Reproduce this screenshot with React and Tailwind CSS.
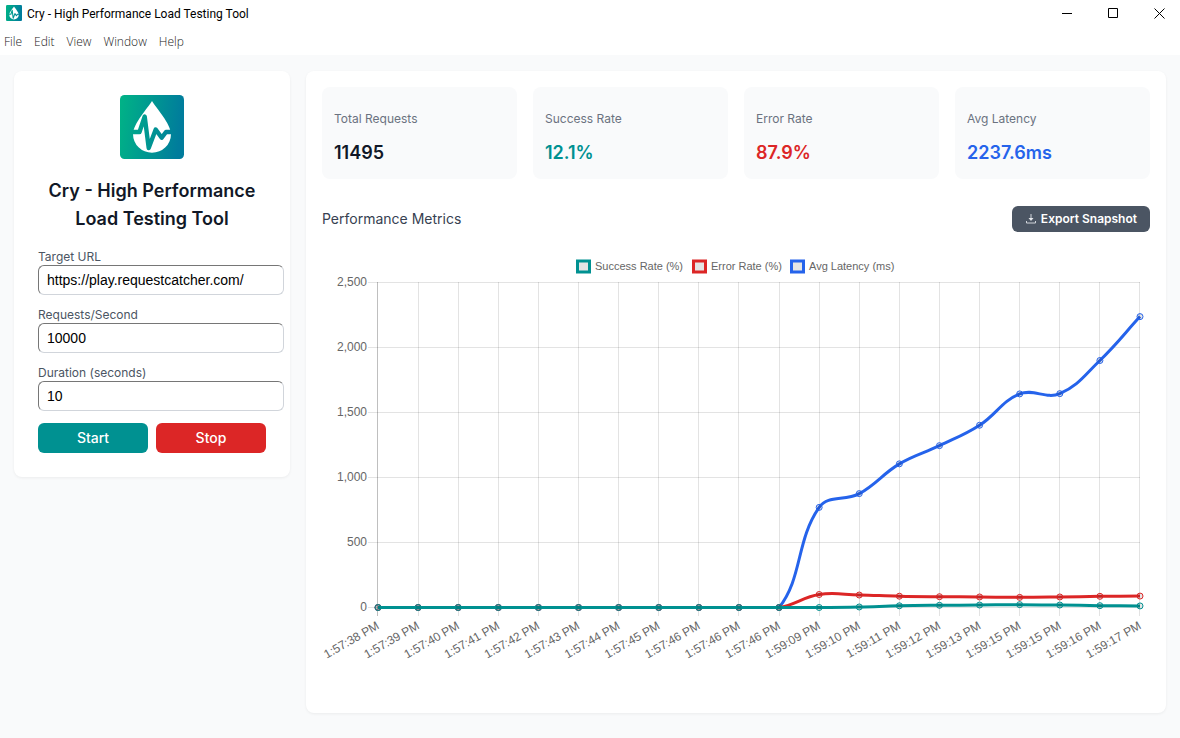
import React from "react";

const LABELS = [
  "1:57:38 PM", "1:57:39 PM", "1:57:40 PM", "1:57:41 PM", "1:57:42 PM",
  "1:57:43 PM", "1:57:44 PM", "1:57:45 PM", "1:57:46 PM", "1:57:46 PM",
  "1:57:46 PM", "1:59:09 PM", "1:59:10 PM", "1:59:11 PM", "1:59:12 PM",
  "1:59:13 PM", "1:59:15 PM", "1:59:15 PM", "1:59:16 PM", "1:59:17 PM",
];

const IDLE = Array(11).fill(0);

const SERIES = [
  { name: "Success Rate (%)", stroke: "#009191", box: 254, data: [...IDLE, 0, 4, 13, 17, 19, 22, 19, 14, 12.1] },
  { name: "Error Rate (%)", stroke: "#dc2626", box: 370, data: [...IDLE, 100, 96, 87, 83, 81, 78, 81, 86, 87.9] },
  { name: "Avg Latency (ms)", stroke: "#2563eb", box: 468, data: [...IDLE, 770, 876, 1105, 1245, 1402, 1643, 1645, 1900, 2237.6] },
];

const AREA = { left: 56, right: 818, top: 34, bottom: 360 };
const MAX = 2500;

const xAt = (i) => AREA.left + ((AREA.right - AREA.left) * i) / (LABELS.length - 1);
const yAt = (v) => AREA.bottom - 0.5 - (v / MAX) * 325;
const snap = (n) => Math.floor(n) + 0.5;
const clamp = (y) => Math.min(AREA.bottom - 0.5, Math.max(AREA.top, y));

// Cardinal-style spline with control points weighted by neighbour distance.
function curve(data, tension = 0.4) {
  const pts = data.map((v, i) => ({ x: xAt(i), y: yAt(v) }));
  const ctl = pts.map((p, i) => {
    const a = pts[i - 1] || p;
    const b = pts[i + 1] || p;
    const d1 = Math.hypot(p.x - a.x, p.y - a.y);
    const d2 = Math.hypot(b.x - p.x, b.y - p.y);
    const f1 = (tension * d1) / (d1 + d2);
    const f2 = (tension * d2) / (d1 + d2);
    return {
      px: p.x - f1 * (b.x - a.x),
      py: clamp(p.y - f1 * (b.y - a.y)),
      nx: p.x + f2 * (b.x - a.x),
      ny: clamp(p.y + f2 * (b.y - a.y)),
    };
  });
  return pts
    .map((p, i) =>
      i === 0
        ? `M${p.x} ${p.y}`
        : `C${ctl[i - 1].nx} ${ctl[i - 1].ny} ${ctl[i].px} ${ctl[i].py} ${p.x} ${p.y}`
    )
    .join("");
}

function Chart() {
  return (
    <svg
      viewBox="0 0 828 414"
      role="img"
      aria-label="Performance metrics over time"
      className="block w-full overflow-visible font-['Liberation_Sans',Arial,sans-serif]"
    >
      {SERIES.map((s) => (
        <g key={s.name}>
          <rect x={s.box + 1.5} y="13" width="12" height="11" fill="#e5e5e5" stroke={s.stroke} strokeWidth="3" />
          <text x={s.box + 19} y="22" fontSize="11" fill="#666">{s.name}</text>
        </g>
      ))}
      {[0, 500, 1000, 1500, 2000, 2500].map((v) => (
        <g key={v}>
          <line x1="46" x2={AREA.right} y1={snap(yAt(v))} y2={snap(yAt(v))} stroke="#000" strokeOpacity="0.11" />
          <text x="45" y={snap(yAt(v)) + 3} fontSize="12" fill="#666" textAnchor="end">{v.toLocaleString("en-US")}</text>
        </g>
      ))}
      {LABELS.map((label, i) => {
        const x = snap(xAt(i));
        return (
          <g key={i}>
            <line x1={x - (i === 0 || i === LABELS.length - 1 ? 1 : 0)} x2={x - (i === 0 || i === LABELS.length - 1 ? 1 : 0)} y1={AREA.top} y2="368" stroke="#000" strokeOpacity={i === 0 ? 0.25 : 0.11} />
            <text transform={`translate(${xAt(i) + 2} 380) rotate(-30)`} fontSize="12" fill="#666" textAnchor="end">{label}</text>
          </g>
        );
      })}
      {[...SERIES].reverse().map((s) => (
        <g key={s.name}>
          <path d={curve(s.data)} fill="none" stroke={s.stroke} strokeWidth="3" />
          {s.data.map((v, i) => (
            <circle key={i} cx={xAt(i)} cy={yAt(v)} r="3" fill="#000" fillOpacity="0.1" stroke={s.stroke} strokeWidth="1" />
          ))}
        </g>
      ))}
    </svg>
  );
}

function Logo({ id, className }) {
  return (
    <svg viewBox="0 0 64 64" className={className} aria-hidden="true">
      <defs>
        <linearGradient id={id} gradientUnits="userSpaceOnUse" x1="0" y1="0" x2="64" y2="8">
          <stop offset="0" stopColor="#00b386" />
          <stop offset="1" stopColor="#007c9c" />
        </linearGradient>
      </defs>
      <rect width="64" height="64" rx="4.5" fill={`url(#${id})`} />
      <path d="M32 6C35.500 12 51 29 51 39A19 18.800 0 0 1 13 39C13 29 28.500 12 32 6Z" fill="#fff" />
      <path
        d="M12 37H19.500L24.700 21.500L28.700 53L35.700 34.500L41.700 42.800L46 37H52"
        fill="none"
        stroke={`url(#${id})`}
        strokeWidth="4.4"
        strokeLinejoin="round"
      />
    </svg>
  );
}

function Field({ id, label, ...props }) {
  return (
    <div className="mb-3">
      <label htmlFor={id} className="block text-xs leading-4 text-[#4b5563]">{label}</label>
      <input
        id={id}
        className="block h-[30px] w-[calc(100%+18px)] rounded-md border border-t-[#767676] border-l-[#767676] border-r-[#d1d5db] border-b-[#d1d5db] bg-white px-2 font-['Liberation_Sans',Arial,sans-serif] text-sm text-black"
        {...props}
      />
    </div>
  );
}

const STATS = [
  { label: "Total Requests", value: "11495", tone: "text-[#111827]" },
  { label: "Success Rate", value: "12.1%", tone: "text-[#009191]" },
  { label: "Error Rate", value: "87.9%", tone: "text-[#dc2626]" },
  { label: "Avg Latency", value: "2237.6ms", tone: "text-[#2563eb]" },
];

export default function App() {
  return (
    <div className="min-h-screen overflow-x-hidden bg-[#f9fafb] font-['Inter',sans-serif]">
      <header className="bg-white text-xs text-black">
        <div className="flex h-7 items-center">
          <Logo id="title-logo" className="ml-1.5 mb-0.5 size-4" />
          <span className="ml-[5px] font-['Roboto',sans-serif]">Cry - High Performance Load Testing Tool</span>
          <div className="-mr-0.5 mb-0.5 ml-auto flex h-[26px]">
            <button type="button" aria-label="Minimize" className="flex w-[46px] items-center justify-center">
              <svg width="11" height="11" stroke="#000" fill="none"><path d="M0 5.5H10" /></svg>
            </button>
            <button type="button" aria-label="Maximize" className="flex w-[46px] items-center justify-center">
              <svg width="11" height="11" stroke="#000" fill="none"><path d="M.5 .5H9.5V9.5H.5Z" /></svg>
            </button>
            <button type="button" aria-label="Close" className="flex w-[46px] items-center justify-center">
              <svg width="11" height="11" stroke="#000" fill="none"><path d="M.5 .5L10.5 10.5M10.5 .5L.5 10.5" /></svg>
            </button>
          </div>
        </div>
        <nav className="flex h-[27px] items-center gap-3 px-1 font-['Open_Sans',sans-serif] font-light text-[#222]">
          {["File", "Edit", "View", "Window", "Help"].map((item) => (
            <button type="button" key={item}>{item}</button>
          ))}
        </nav>
      </header>

      <div className="flex items-start gap-4 px-3.5 pt-4 pb-6">
        <aside className="w-[276px] shrink-0 rounded-lg bg-white p-6 shadow-[0_1px_3px_rgba(0,0,0,0.06)]">
          <Logo id="panel-logo" className="mx-auto block size-16" />
          <h1 className="mt-[18px] mb-4 text-center text-lg leading-7 font-semibold text-[#111827]">
            Cry - High Performance Load Testing Tool
          </h1>
          <form onSubmit={(e) => e.preventDefault()}>
            <Field id="url" label="Target URL" type="text" defaultValue="https://play.requestcatcher.com/" />
            <Field id="rps" label="Requests/Second" type="text" inputMode="numeric" defaultValue="10000" />
            <Field id="duration" label="Duration (seconds)" type="text" inputMode="numeric" defaultValue="10" />
            <div className="grid grid-cols-2 gap-2 text-sm font-medium text-white">
              <button type="submit" className="h-[30px] rounded-md bg-[#009191]">Start</button>
              <button type="button" className="h-[30px] rounded-md bg-[#dc2626]">Stop</button>
            </div>
          </form>
        </aside>

        <main className="min-w-0 flex-1 rounded-lg bg-white p-4 shadow-[0_1px_3px_rgba(0,0,0,0.06)]">
          <dl className="grid grid-cols-4 gap-4">
            {STATS.map((s) => (
              <div key={s.label} className="rounded-lg bg-[#f9fafb] px-3 pt-[22px] pb-3">
                <dt className="text-xs leading-5 text-[#6b7280]">{s.label}</dt>
                <dd className={`mt-2.5 text-lg leading-7 font-semibold ${s.tone}`}>{s.value}</dd>
              </div>
            ))}
          </dl>

          <div className="mt-[27px] mb-4 flex items-center justify-between">
            <h2 className="text-sm text-[#374151]">Performance Metrics</h2>
            <button type="button" className="flex h-[26px] items-center gap-1 rounded-md bg-[#4b5563] px-[13px] text-xs font-semibold text-white">
              <svg width="12" height="12" viewBox="0 0 12 12" fill="none" stroke="#d1d5db" aria-hidden="true">
                <path d="M6 1V6M1.500 8V10H10.500V8" />
                <path d="M3.500 5H8.500L6 8Z" fill="#e5e7eb" stroke="none" />
              </svg>
              Export Snapshot
            </button>
          </div>

          <div className="min-h-[449px]">
            <Chart />
          </div>
        </main>
      </div>
    </div>
  );
}
